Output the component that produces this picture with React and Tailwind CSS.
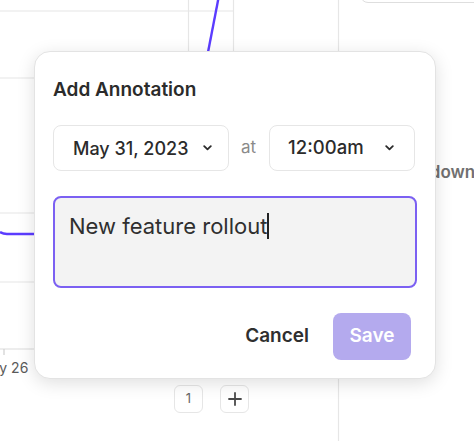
import React from "react";

function Chevron() {
  return (
    <svg width="9" height="6" viewBox="0 0 9 6" fill="none" className="shrink-0">
      <path d="M1.2 1.2 L4.5 4.4 L7.8 1.2" stroke="#2b2b2b" strokeWidth="1.8" strokeLinecap="round" strokeLinejoin="round" />
    </svg>
  );
}

export default function App() {
  return (
    <div
      className="relative w-[474px] h-[441px] overflow-hidden bg-white"
      style={{ fontFamily: "Inter, 'Noto Sans', sans-serif" }}
    >
      {/* background chart drawing */}
      <svg className="absolute inset-0" width="474" height="441" viewBox="0 0 474 441">
        <g stroke="#e6e6e6" strokeWidth="1.2" fill="none">
          <line x1="0" y1="11" x2="233" y2="11" />
          <line x1="188.5" y1="0" x2="188.5" y2="60" />
          <line x1="233.5" y1="0" x2="233.5" y2="60" />
          <line x1="338.5" y1="0" x2="338.5" y2="441" />
          <line x1="0" y1="78" x2="40" y2="78" />
          <line x1="0" y1="213" x2="40" y2="213" />
          <line x1="0" y1="282" x2="40" y2="282" />
          <line x1="0" y1="349" x2="40" y2="349" stroke="#dcdcdc" />
          <line x1="4" y1="349" x2="4" y2="355" stroke="#cfcfcf" />
        </g>
        <path d="M218.5 -2 L206.5 60" stroke="#5b3cff" strokeWidth="2.4" fill="none" />
        <path d="M0 232 Q3 234 7 234 L40 234" stroke="#5b3cff" strokeWidth="2.4" fill="none" />
      </svg>

      {/* top right card edge */}
      <div className="absolute left-[360px] top-[-30px] w-[200px] h-[33px] rounded-lg border border-[#dedede] bg-white" />

      {/* axis label */}
      <div className="absolute left-[-21px] top-[358px] text-[14px] leading-[20px] text-[#5a5a5a]">May 26</div>

      {/* right column label */}
      <div className="absolute left-[383px] top-[160px] text-[17px] leading-[24px] font-semibold text-[#707070]">Breakdown</div>

      {/* pager */}
      <div className="absolute left-[174px] top-[385px] flex gap-[17px]">
        <div className="w-[29px] h-[28px] rounded-md border border-[#e6e6e6] flex items-center justify-center text-[13px] text-[#666]">1</div>
        <div className="w-[29px] h-[28px] rounded-md border border-[#e6e6e6] flex items-center justify-center">
          <svg width="14" height="14" viewBox="0 0 14 14">
            <path d="M7 1 V13 M1 7 H13" stroke="#4a4a4a" strokeWidth="1.8" strokeLinecap="round" />
          </svg>
        </div>
      </div>

      {/* popover */}
      <div className="absolute left-[34px] top-[51px] w-[402px] h-[328px] rounded-[16px] border border-[#e3e3e3] bg-white shadow-[0_4px_18px_rgba(0,0,0,0.13)] pt-[25px] pl-[18px] pr-[18px] pb-[18px] flex flex-col">
        <div className="text-[19px] leading-[26px] font-semibold text-[#2b2b2b]">Add Annotation</div>

        <div className="mt-[22px] flex items-center">
          <div className="w-[176px] h-[46px] rounded-lg border border-[#e6e6e6] flex items-center pl-[19px] pr-[15px] gap-[15px]">
            <span className="text-[18px] font-medium text-[#2b2b2b] whitespace-nowrap">May 31, 2023</span>
            <Chevron />
          </div>
          <span className="ml-[12px] text-[17px] text-[#8a8a8a]">at</span>
          <div className="ml-[13px] w-[146px] h-[46px] rounded-lg border border-[#e6e6e6] flex items-center justify-between pl-[18px] pr-[20px]">
            <span className="text-[18.5px] font-medium text-[#2b2b2b]">12:00am</span>
            <Chevron />
          </div>
        </div>

        <div className="mt-[25px] h-[94px] rounded-lg border-2 border-[#7b60f2] bg-[#f3f3f3] px-[14px] pt-[14px]">
          <div className="flex items-center text-[22px] leading-[28px] text-[#2f2f2f]">
            <span>New feature rollout</span>
            <span className="inline-block w-[1.5px] h-[26px] bg-[#222]" />
          </div>
        </div>

        <div className="mt-[25px] flex items-center justify-end pr-[6px] gap-[24px]">
          <span className="text-[19px] font-semibold text-[#2f2f2f]">Cancel</span>
          <div className="w-[78px] h-[47px] rounded-lg bg-[#b4aaee] flex items-center justify-center text-[19px] font-semibold text-white">
            Save
          </div>
        </div>
      </div>
    </div>
  );
}
